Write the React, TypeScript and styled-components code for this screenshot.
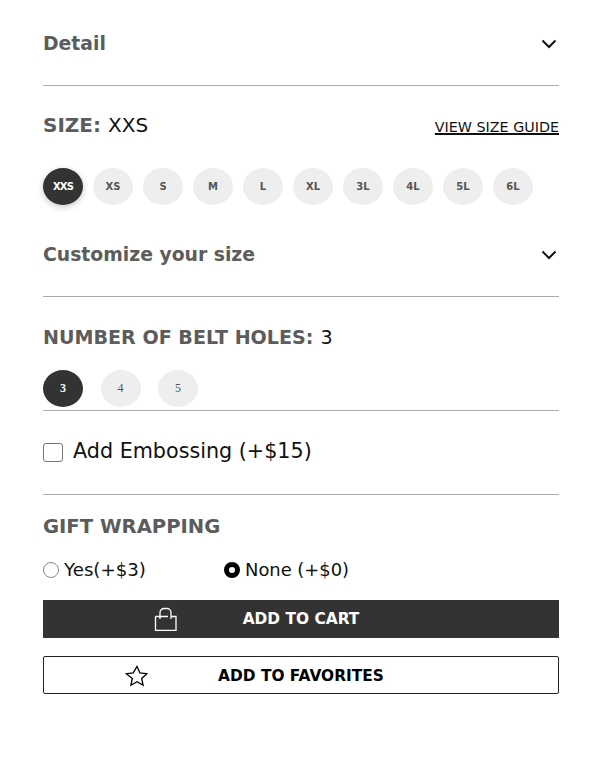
import React from "react";
import styled, { createGlobalStyle } from "styled-components";

const Global = createGlobalStyle`
  html, body { margin: 0; padding: 0; background: #fff; }
  body { font-family: "DejaVu Sans", Verdana, sans-serif; color: #111; }
`;
const Page = styled.div`
  width: 516px;
  padding: 0 41px 0 43px;
  display: flex;
  flex-direction: column;
`;
const AccordionRow = styled.div<{ $height: number }>`
  height: ${(p) => p.$height}px;
  display: flex;
  justify-content: space-between;
  align-items: flex-start;
  border-bottom: 1px solid #aaa;
`;
const AccordionTitle = styled.div<{ $top: number }>`
  font-size: 18.8px;
  font-weight: 700;
  color: #5c5c5c;
  line-height: 24px;
  margin-top: ${(p) => p.$top}px;
`;
const Chevron = styled.svg<{ $top: number }>`
  width: 16px;
  height: 10px;
  margin-top: ${(p) => p.$top}px;
  margin-right: 2px;
  fill: none;
  stroke: #111;
  stroke-width: 2;
`;
const HeadingRow = styled.div<{ $top: number }>`
  display: flex;
  justify-content: space-between;
  align-items: baseline;
  margin-top: ${(p) => p.$top}px;
  line-height: 24px;
`;
const Heading = styled.div<{ $size: number }>`
  font-size: ${(p) => p.$size}px;
  font-weight: 700;
  color: #5c5c5c;
`;
const HeadingValue = styled.span`
  font-weight: 400;
  color: #111;
  margin-left: 7px;
`;
const GuideLink = styled.a`
  font-size: 14.3px;
  color: #111;
  text-decoration: underline;
  text-decoration-thickness: 1.5px;
`;
const Pills = styled.div<{ $gap: number; $top: number }>`
  display: flex;
  gap: ${(p) => p.$gap}px;
  margin-top: ${(p) => p.$top}px;
`;
const Pill = styled.div<{ $active?: boolean; $serif?: boolean }>`
  width: 40px;
  height: 37px;
  border-radius: 50%;
  display: flex;
  align-items: center;
  justify-content: center;
  font-family: ${(p) => (p.$serif ? '"Liberation Serif", serif' : '"DejaVu Sans", sans-serif')};
  font-size: ${(p) => (p.$serif ? 12 : 10)}px;
  font-weight: ${(p) => (p.$serif && !p.$active ? 400 : 700)};
  letter-spacing: ${(p) => (p.$active && !p.$serif ? "-0.8px" : "0")};
  background: ${(p) => (p.$active ? "#333" : "#eee")};
  color: ${(p) => (p.$active ? "#fff" : "#555")};
  box-shadow: ${(p) => (p.$active && !p.$serif ? "0 2px 6px rgba(0,0,0,.22)" : "none")};
`;
const Divider = styled.div<{ $top: number }>`
  height: 1px;
  background: #aaa;
  margin-top: ${(p) => p.$top}px;
`;
const CheckRow = styled.label`
  display: flex;
  align-items: center;
  gap: 10px;
  height: 24px;
  margin-top: 28px;
  font-size: 20.7px;
  color: #111;
`;
const Checkbox = styled.span`
  width: 20px;
  height: 19px;
  margin-top: 3px;
  box-sizing: border-box;
  border: 1px solid #777;
  border-radius: 3px;
  background: #fff;
`;
const RadioRow = styled.div`
  display: flex;
  margin-top: 18px;
  height: 24px;
  align-items: center;
  color: #111;
`;
const RadioLabel = styled.label<{ $width: number; $size: number }>`
  display: flex;
  align-items: center;
  width: ${(p) => p.$width}px;
  font-size: ${(p) => p.$size}px;
  gap: 5px;
`;
const Radio = styled.span<{ $on?: boolean }>`
  width: 16px;
  height: 16px;
  box-sizing: border-box;
  border-radius: 50%;
  margin-top: 2px;
  background: #fff;
  border: ${(p) => (p.$on ? "5px solid #000" : "1px solid #888")};
`;
const ActionButton = styled.button<{ $dark?: boolean; $top: number }>`
  position: relative;
  display: block;
  width: 100%;
  height: 38px;
  margin-top: ${(p) => p.$top}px;
  padding: ${(p) => (p.$dark ? "0" : "1px 0 0")};
  font-family: "DejaVu Sans", sans-serif;
  font-size: 15.4px;
  font-weight: 700;
  text-align: center;
  color: ${(p) => (p.$dark ? "#fff" : "#000")};
  background: ${(p) => (p.$dark ? "#333" : "#fff")};
  border: ${(p) => (p.$dark ? "none" : "1px solid #222")};
  border-radius: ${(p) => (p.$dark ? 0 : 2)}px;
`;
const ButtonIcon = styled.svg<{ $left: number; $nudge: number }>`
  position: absolute;
  left: ${(p) => p.$left}px;
  top: calc(50% + ${(p) => p.$nudge}px);
  transform: translateY(-50%);
  width: 24px;
  height: 24px;
  fill: none;
  stroke: currentColor;
  stroke-width: 1.3;
`;
const ChevronIcon = ({ top }: { top: number }) => (
  <Chevron $top={top} viewBox="0 0 16 10"><path d="M1.5 1.5 8 8l6.5-6.5" /></Chevron>
);

export default function App() {
  return (
    <Page>
      <Global />
      <AccordionRow $height={85}>
        <AccordionTitle $top={32}>Detail</AccordionTitle>
        <ChevronIcon top={39} />
      </AccordionRow>
      <HeadingRow $top={27}>
        <Heading $size={20}>SIZE:<HeadingValue>XXS</HeadingValue></Heading>
        <GuideLink href="#">VIEW SIZE GUIDE</GuideLink>
      </HeadingRow>
      <Pills $gap={10} $top={29}>
        {["XXS", "XS", "S", "M", "L", "XL", "3L", "4L", "5L", "6L"].map((s, i) => (
          <Pill key={s} $active={i === 0}>{s}</Pill>
        ))}
      </Pills>
      <AccordionRow $height={91}>
        <AccordionTitle $top={38}>Customize your size</AccordionTitle>
        <ChevronIcon top={45} />
      </AccordionRow>
      <HeadingRow $top={29}>
        <Heading $size={19.1}>NUMBER OF BELT HOLES:<HeadingValue>3</HeadingValue></Heading>
      </HeadingRow>
      <Pills $gap={17.5} $top={20}>
        {["3", "4", "5"].map((s, i) => (
          <Pill key={s} $active={i === 0} $serif>{s}</Pill>
        ))}
      </Pills>
      <Divider $top={3} />
      <CheckRow><Checkbox />Add Embossing (+$15)</CheckRow>
      <Divider $top={31} />
      <HeadingRow $top={20}><Heading $size={19.6}>GIFT WRAPPING</Heading></HeadingRow>
      <RadioRow>
        <RadioLabel $width={181} $size={18.2}><Radio />Yes(+$3)</RadioLabel>
        <RadioLabel $width={200} $size={17.9}><Radio $on />None (+$0)</RadioLabel>
      </RadioRow>
      <ActionButton $dark $top={19}>
        <ButtonIcon $left={111} $nudge={0} viewBox="0 0 24 24">
          <path d="M1.5 9.5V23.5H22V9.5H17M1.5 9.5H6M6 12V5.5A4 4 0 0 1 10 1.5h3A4 4 0 0 1 17 5.5V12M6 9.5H14" />
        </ButtonIcon>
        ADD TO CART
      </ActionButton>
      <ActionButton $top={18}>
        <ButtonIcon $left={81} $nudge={1} viewBox="0 0 24 24">
          <path d="M12 2.5l2.9 6.4 6.9.8-5.1 4.7 1.4 6.9-6.1-3.5-6.1 3.5 1.4-6.9L1.3 9.7l6.9-.8z" />
        </ButtonIcon>
        ADD TO FAVORITES
      </ActionButton>
    </Page>
  );
}
